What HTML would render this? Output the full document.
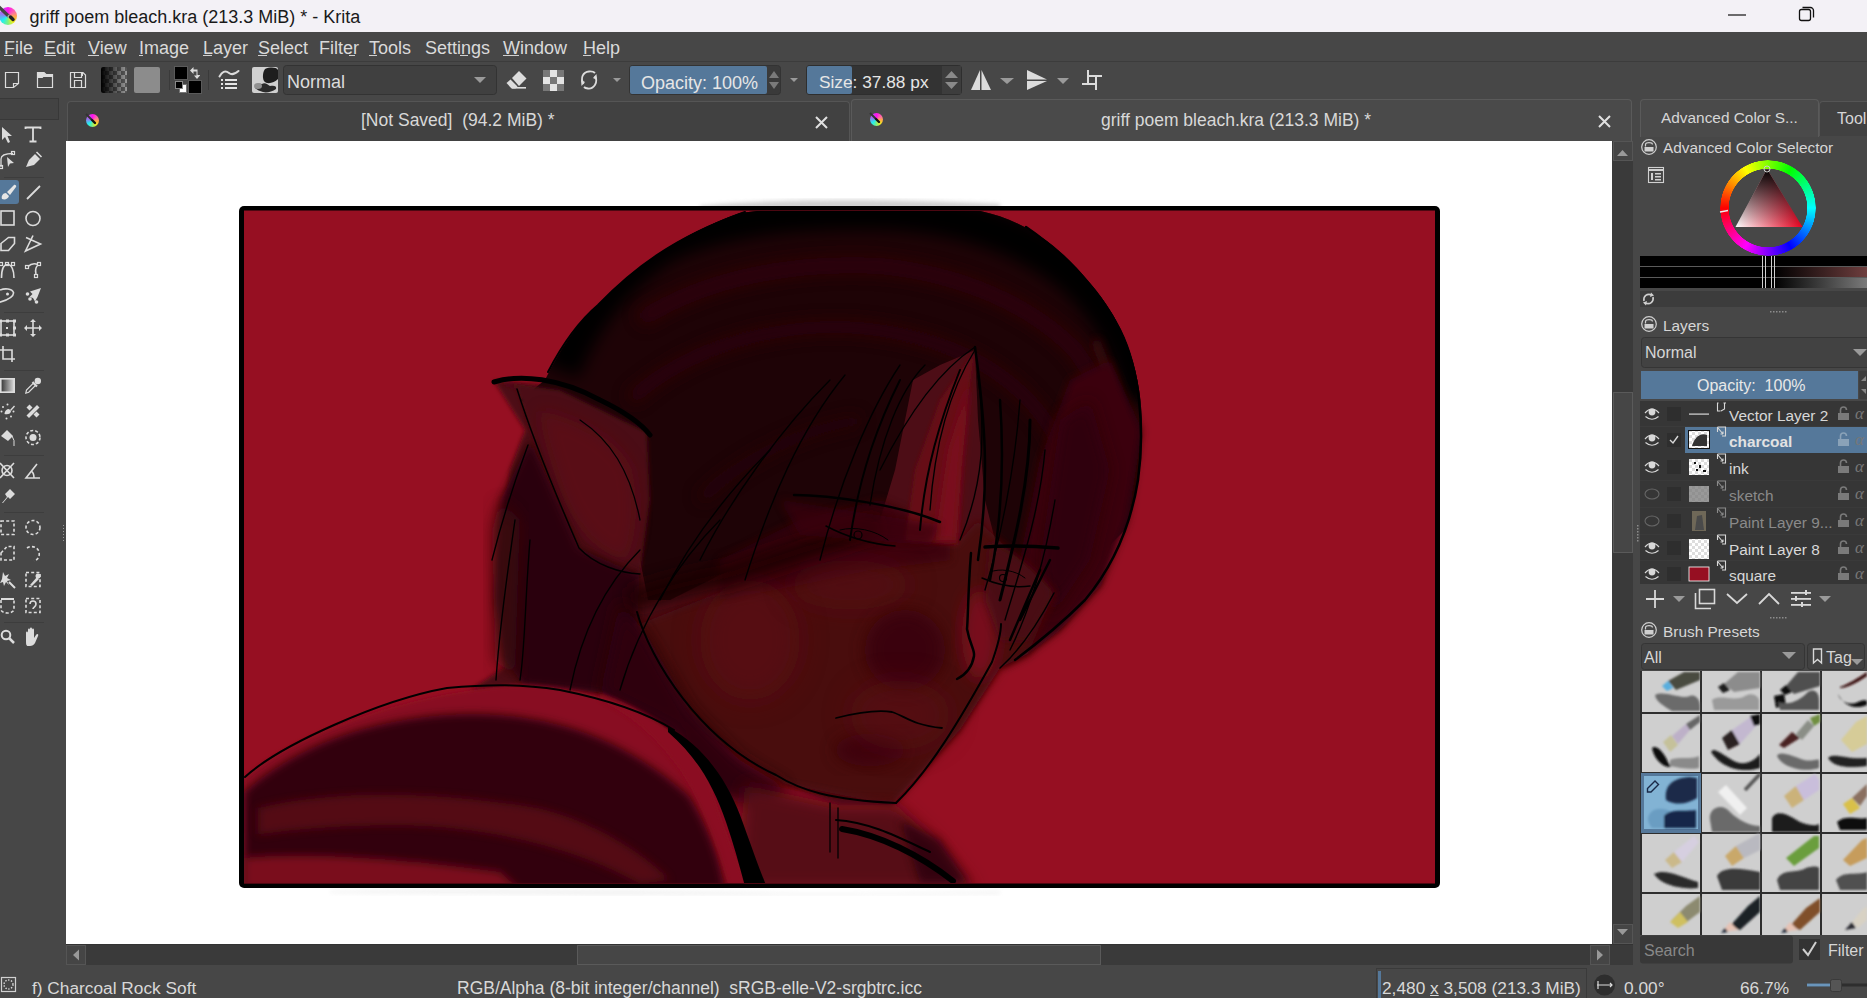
<!DOCTYPE html>
<html><head><meta charset="utf-8">
<style>
*{margin:0;padding:0;box-sizing:border-box}
html,body{width:1867px;height:998px;overflow:hidden;background:#474747;font-family:"Liberation Sans",sans-serif;color:#dcdcdc}
.a{position:absolute}
.t{position:absolute;white-space:nowrap;line-height:1}
svg{position:absolute;overflow:visible}
#title{left:0;top:0;width:1867px;height:32px;background:#f3f1f6}
#menu{left:0;top:32px;width:1867px;height:30px;background:#474747;border-bottom:1px solid #3c3c3c}
.mi{top:39px;font-size:18px;color:#dadada}
.mi u{text-decoration:none;border-bottom:1px solid #dadada}
</style></head><body>
<!-- title bar -->
<div id="title" class="a"></div>
<div class="t" style="left:29.5px;top:7.5px;font-size:18px;color:#1a1a1a">griff poem bleach.kra (213.3 MiB) * - Krita</div>
<!-- menu -->
<div id="menu" class="a"></div>
<div class="t mi" style="left:4px">File</div>
<div class="t mi" style="left:44px">Edit</div>
<div class="t mi" style="left:88px">View</div>
<div class="t mi" style="left:139px">Image</div>
<div class="t mi" style="left:203px">Layer</div>
<div class="t mi" style="left:258px">Select</div>
<div class="t mi" style="left:319px">Filter</div>
<div class="t mi" style="left:369px">Tools</div>
<div class="t mi" style="left:425px">Settings</div>
<div class="t mi" style="left:503px">Window</div>
<div class="t mi" style="left:583px">Help</div>


<svg style="left:0;top:0" width="700" height="70" viewBox="0 0 700 70"><rect x="4" y="55" width="9" height="1" fill="#d0d0d0"/><rect x="44" y="55" width="12" height="1" fill="#d0d0d0"/><rect x="88" y="55" width="11" height="1" fill="#d0d0d0"/><rect x="139" y="55" width="4" height="1" fill="#d0d0d0"/><rect x="203" y="55" width="9" height="1" fill="#d0d0d0"/><rect x="258" y="55" width="9" height="1" fill="#d0d0d0"/><rect x="349" y="55" width="6" height="1" fill="#d0d0d0"/><rect x="369" y="55" width="8" height="1" fill="#d0d0d0"/><rect x="460" y="55" width="8" height="1" fill="#d0d0d0"/><rect x="503" y="55" width="16" height="1" fill="#d0d0d0"/><rect x="583" y="55" width="8" height="1" fill="#d0d0d0"/></svg>
<!-- toolbar -->
<svg style="left:0;top:0" width="1867" height="100" viewBox="0 0 1867 100">
 <g fill="none" stroke="#dcdcdc" stroke-width="1.2">
  <path d="M5.5 72.5H18.5V83.5L13.5 87.5H5.5Z"/>
  <path d="M13.5 87.5V83.5H18.5"/>
  <path d="M37.5 72.5H44L46 74.5H52.5V87.5H37.5Z"/>
  <path d="M38 77.5H42L43.5 75.5H52"/>
  <path d="M70.5 72.5H83L85.5 75V87.5H70.5Z"/>
  <path d="M74.5 72.5V77.5H81.5V72.5"/>
  <path d="M74.5 87.5V80.5H81.5V87.5"/>
 </g>
 <path d="M38 72.5H44L46 74.5H52.5V77H43.5L42 78H38Z" fill="#dcdcdc"/>
 <rect x="82" y="73" width="1" height="3" fill="#dcdcdc"/>
 <defs>
  <pattern id="chk4" width="8" height="8" patternUnits="userSpaceOnUse" x="101" y="67">
   <rect width="8" height="8" fill="#9a9a9a"/><rect width="4" height="4" fill="#5a5a5a"/><rect x="4" y="4" width="4" height="4" fill="#5a5a5a"/>
  </pattern>
  <linearGradient id="g1" x1="0" x2="1"><stop offset="0" stop-color="#000"/><stop offset="1" stop-color="#000" stop-opacity="0"/></linearGradient>
 </defs>
 <rect x="101" y="67" width="26" height="26" rx="2" fill="url(#chk4)"/>
 <rect x="101" y="67" width="26" height="26" rx="2" fill="url(#g1)"/>
 <rect x="134" y="67" width="26" height="26" rx="2" fill="#8c8c8c"/>
 <rect x="169" y="70" width="1" height="20" fill="#3a3a3a"/>
 <rect x="174.5" y="66.5" width="13" height="13" fill="#000" stroke="#5a5a5a"/>
 <rect x="188.5" y="80.5" width="13" height="13" fill="#000" stroke="#5a5a5a"/>
 <rect x="179.5" y="84.5" width="7" height="8" fill="#fff" stroke="#777"/>
 <rect x="175.5" y="81.5" width="7" height="7" fill="#000" stroke="#888"/>
 <path d="M190 70.5L193.5 67V69.5H197.5V75H200V75.5L197 79L194 75.5H196.5V71.5H193.5V74Z" fill="#dcdcdc"/>
 <rect x="208" y="70" width="1" height="20" fill="#3a3a3a"/>
 <path d="M219.5 76.5C222 72 225 70 229 73C232 75.5 235 74 238.5 71" fill="none" stroke="#dcdcdc" stroke-width="2" stroke-linecap="round"/>
 <g fill="#e6e6e6"><rect x="221" y="79" width="2" height="2"/><rect x="225" y="79" width="12" height="2"/><rect x="221" y="83" width="2" height="2"/><rect x="225" y="83" width="12" height="2"/><rect x="221" y="87" width="2" height="2"/><rect x="225" y="87" width="12" height="2"/></g>
 <rect x="252" y="67" width="26" height="26" rx="2" fill="#d0d0d0"/>
 <path d="M265 69C270 67 276 67 278 70V79C274 83 267 85 264 81C262 77 263 72 265 69Z" fill="#1e1e1e"/>
 <path d="M255 88C254 84 258 83 262 84C265 82 268 85 270 86C274 85 277 86 276 89C272 92 266 93 263 92C260 91 257 90 255 88Z" fill="#2a2a2a"/>
 <ellipse cx="258" cy="86" rx="4" ry="3" fill="#909090"/>
 <rect x="283.5" y="65.5" width="213" height="29" rx="3" fill="#404040" stroke="#333"/>
 <path d="M474 77H486L480 83Z" fill="#9a9a9a"/>
 <path d="M512 78L519 71L526.5 78.5L519 86Z" fill="#dcdcdc"/>
 <path d="M506.5 83L510.5 79.5L517.5 86.5L515.5 88.5H511.5Z" fill="#dcdcdc"/>
 <rect x="512" y="87" width="14" height="1.6" fill="#dcdcdc"/>
 <g><rect x="543" y="70" width="21" height="21" fill="#e4e4e4"/>
  <rect x="543" y="70" width="7" height="7" fill="#787878"/><rect x="557" y="70" width="7" height="7" fill="#787878"/>
  <rect x="550" y="77" width="7" height="7" fill="#787878"/>
  <rect x="543" y="84" width="7" height="7" fill="#787878"/><rect x="557" y="84" width="7" height="7" fill="#787878"/></g>
 <path d="M583.5 84C580 78 583 72 589 71.5C592 71.3 594 72 595 73" fill="none" stroke="#dcdcdc" stroke-width="1.8"/>
 <path d="M595 76C598.5 82 594 89 588 88.5C586 88.3 585 88 584 87" fill="none" stroke="#dcdcdc" stroke-width="1.8"/>
 <path d="M581 80L585 82L581.5 86Z" fill="#dcdcdc"/>
 <path d="M597 80L593 78L596.5 74Z" fill="#dcdcdc"/>
 <path d="M613 78H621L617 82Z" fill="#9a9a9a"/>
 <!-- opacity slider -->
 <rect x="629.5" y="65.5" width="151" height="29" rx="3" fill="#3a3a3a" stroke="#333"/>
 <rect x="630" y="66" width="137" height="28" rx="2" fill="#55789a"/>
 <path d="M769 78L774 71L779 78Z" fill="#7a7a7a"/><path d="M769 82L774 89L779 82Z" fill="#7a7a7a"/>
 <path d="M790 78H798L794 82Z" fill="#9a9a9a"/>
 <rect x="806.5" y="65.5" width="155" height="29" rx="3" fill="#333" stroke="#2e2e2e"/>
 <rect x="807" y="66" width="45" height="28" rx="2" fill="#55789a"/>
 <rect x="942" y="66" width="19" height="28" fill="#3d3d3d"/>
 <path d="M945 78L951.5 71L958 78Z" fill="#8a8a8a"/><path d="M945 82L951.5 89L958 82Z" fill="#8a8a8a"/>
 <path d="M980 70V90H971Z" fill="#dcdcdc"/><path d="M981.5 70V90H991Z" fill="#dcdcdc"/>
 <path d="M1000 78H1014L1007 84Z" fill="#9a9a9a"/>
 <path d="M1027 70L1047 79.5H1027Z" fill="#dcdcdc"/><path d="M1027 81H1047L1027 90Z" fill="#dcdcdc"/>
 <path d="M1057 78H1069L1063 84Z" fill="#9a9a9a"/>
 <path d="M1088 70V85M1082 84H1097M1096 76V90M1087 76H1102" fill="none" stroke="#dcdcdc" stroke-width="2"/>
</svg>
<div class="t" style="left:287px;top:73px;font-size:18px;color:#dcdcdc">Normal</div>
<div class="t" style="left:641px;top:73.5px;font-size:18px;color:#e6e6e6">Opacity: 100%</div>
<div class="t" style="left:819px;top:74px;font-size:17.3px;color:#e6e6e6">Size: 37.88 px</div>


<!-- toolbox -->
<div class="a" style="left:-1px;top:98px;width:60px;height:22px;background:#434343;border:1px solid #383838"></div>
<svg style="left:0;top:0" width="70" height="998" viewBox="0 0 70 998">
 <g fill="none" stroke="#dcdcdc" stroke-width="1.6">
  <!-- row1 select arrow / text -->
  <path d="M2 127L2 140L5 137L8 143L10 142L7.5 136L12 136Z" fill="#dcdcdc" stroke="none"/>
  <path d="M25.5 129V127.5H40.5V129M33 127.5V141.5M29.5 141.5H36.5" stroke-width="1.8"/>
  <!-- row2 -->
  <path d="M1 167V159C1 155 5 153.5 13 153.5" stroke-width="1.3"/>
  <rect x="11.5" y="151.5" width="3" height="3" stroke-width="1.2"/>
  <rect x="-0.5" y="165.5" width="3" height="3" stroke-width="1.2"/>
  <path d="M7 157L14 163L10 163.5L8 167Z" fill="#dcdcdc" stroke="none"/>
  <path d="M26 167L29 160L35 154L40 159L34 165Z" fill="#dcdcdc" stroke="none"/>
  <path d="M36.5 152L41.5 157" stroke-width="1.6"/>
 </g>
 <rect x="4" y="177" width="40" height="1" fill="#3d3d3d"/>
 <rect x="-4" y="180" width="23" height="24" rx="3" fill="#55789a"/>
 <path d="M2 199C1 196 3 193 6 193L9 196C8 199 5 200 2 199ZM7 192L14 185C15 184 17 186 16 187L10 195Z" fill="#e6e6e6"/>
 <path d="M27 199L40 186" stroke="#dcdcdc" stroke-width="1.8"/>
 <g fill="none" stroke="#dcdcdc" stroke-width="1.6">
  <rect x="1" y="211" width="13" height="14"/>
  <circle cx="33" cy="218.5" r="7"/>
  <path d="M1 243.5L8.5 237.5H14.5V243.5L8.5 250.5H1Z"/>
  <path d="M26 237.5L40.5 244L25.5 251L33 235.5"/>
  <path d="M1.5 278C1.5 270 3.5 264.5 7.5 264.5C11.5 264.5 14 270 14 278"/>
  <path d="M28 266.5C31 263.5 34 263 38 264.5M38 265C34.5 268 35.5 271 36 274"/>
  <path d="M0 290C5 288 12 288.5 13.5 292.5C14 297 6 300.5 -1 302.5"/>
 </g>
 <g fill="none" stroke="#dcdcdc" stroke-width="1.2"><rect x="-0.5" y="262.5" width="3" height="3"/><rect x="5.5" y="262.5" width="3" height="3"/><rect x="11.5" y="262.5" width="3" height="3"/><rect x="25.5" y="265.5" width="3" height="3"/><rect x="37.5" y="262.5" width="3" height="3"/><rect x="34.5" y="274.5" width="3" height="3"/></g>
 <circle cx="7.5" cy="294" r="1.5" fill="#dcdcdc"/>
 <path d="M41 288L30 291.5L32.5 294L29.5 297L33 298L35 301.5L37.5 297Z" fill="#dcdcdc"/>
 <circle cx="27.5" cy="294" r="1.8" fill="#dcdcdc"/><circle cx="30" cy="299" r="1.8" fill="#dcdcdc"/><circle cx="36.5" cy="302" r="1.8" fill="#dcdcdc"/>
 <rect x="4" y="312" width="40" height="1" fill="#3d3d3d"/>
 <g fill="none" stroke="#dcdcdc" stroke-width="1.6">
  <rect x="1" y="321" width="13" height="14"/>
  <path d="M33 320V336M25 328H41"/>
  <path d="M3 346V359H15M0 350H12V362"/>
 </g>
 <path d="M33 319L30 322H36ZM33 337L30 334H36ZM24 328L27 325V331ZM42 328L39 325V331Z" fill="#dcdcdc"/>
 <g fill="#dcdcdc"><rect x="6" y="327" width="2" height="2"/><rect x="-1" y="319.5" width="3" height="3"/><rect x="13" y="319.5" width="3" height="3"/><rect x="-1" y="333.5" width="3" height="3"/><rect x="13" y="333.5" width="3" height="3"/><rect x="6" y="319.5" width="3" height="3"/><rect x="6" y="333.5" width="3" height="3"/><rect x="13" y="326.5" width="3" height="3"/></g>
 <rect x="4" y="370" width="40" height="1" fill="#3d3d3d"/>
 <defs><linearGradient id="tg" x1="0" x2="1"><stop offset="0" stop-color="#333"/><stop offset="1" stop-color="#ddd"/></linearGradient></defs>
 <rect x="0.8" y="378.8" width="13.4" height="13.4" fill="url(#tg)" stroke="#dcdcdc" stroke-width="1.6"/>
 <circle cx="37.8" cy="381" r="3.2" fill="#dcdcdc"/>
 <path d="M32.5 382L37 386.5" stroke="#dcdcdc" stroke-width="2.2"/>
 <path d="M25.8 393.2L26.5 390L33.5 383L35.7 385.2L28.7 392.2Z" fill="none" stroke="#dcdcdc" stroke-width="1.2"/>
 <g fill="#dcdcdc">
  <path d="M4.5 414C4.5 411 6.5 409 9 409L11 411C11 413.5 8 415 4.5 414Z"/><path d="M10 410L14 405.5L15 406.5L11 411Z"/>
  <circle cx="1.5" cy="411.5" r="1"/><circle cx="6.5" cy="418.5" r="1"/><circle cx="11" cy="416.5" r="1"/><circle cx="13.5" cy="411.5" r="1"/><circle cx="3" cy="407" r="1"/><circle cx="7.5" cy="404.5" r="1"/>
  <path d="M26.5 415.5L37 405L39.5 407.5L29 418Z"/><path d="M29.5 404.5L32.5 407.5L29.5 410.5L26.5 407.5Z"/><path d="M36.5 411.5L39.5 414.5L36.5 417.5L33.5 414.5Z"/>
  <path d="M1 436L7 430L13 436L8 441Z"/><path d="M12 436Q15 440 14 446" stroke="#dcdcdc" fill="none"/>
 </g>
 <circle cx="33" cy="437.5" r="7" fill="none" stroke="#dcdcdc" stroke-width="1.6" stroke-dasharray="3 2"/>
 <circle cx="33" cy="437.5" r="3.5" fill="#dcdcdc"/>
 <rect x="4" y="455" width="40" height="1" fill="#3d3d3d"/>
 <g fill="none" stroke="#dcdcdc" stroke-width="1.6">
  <circle cx="7" cy="470.5" r="5"/><path d="M0 463L14 478M14 463L0 478"/>
  <path d="M40 478H26L37 464M34 478C34 474 33 472 31 471"/>
 </g>
 <path d="M2 503L7 497L5 494L10 489L15 494L10 499L8 497L3 503Z" fill="#dcdcdc"/>
 <rect x="4" y="512" width="40" height="1" fill="#3d3d3d"/>
 <g fill="none" stroke="#dcdcdc" stroke-width="1.6" stroke-dasharray="3 2.2">
  <rect x="1" y="521" width="13" height="13.5"/>
  <circle cx="33" cy="527.5" r="7"/>
  <path d="M1 553L7 546.5H14V560H1Z"/>
  <path d="M27 548C31 545 38 547 39 552C40 556 38 560 34 561"/>
  <rect x="26" y="572.5" width="14" height="14"/>
  <path d="M1 600V610C3 614 12 614 14 610V600"/>
  <rect x="26" y="598.5" width="14" height="14"/>
 </g>
 <g fill="#dcdcdc">
  <path d="M3 572L5 576L9 574L7 578L11 580L7 581L9 585L6 582L4 586L3 582L0 583L2 579Z"/>
  <path d="M9 582L15 588" stroke="#dcdcdc" stroke-width="2"/>
  <path d="M30 585L37 577L39 579L32 586Z"/><circle cx="38" cy="576" r="2.5"/>
  <rect x="1" y="598" width="13" height="2"/>
  <path d="M30 604C30 600 36 600 36 604C36 607 33 607 33 609" fill="none" stroke="#dcdcdc" stroke-width="1.6"/>
 </g>
 <rect x="4" y="622" width="40" height="1" fill="#3d3d3d"/>
 <circle cx="6" cy="635" r="4.3" fill="none" stroke="#dcdcdc" stroke-width="2"/>
 <path d="M9 638L14 643" stroke="#dcdcdc" stroke-width="2.5"/>
 <path d="M26 639V633C26 631 28 631 28 633V637V630C28 628 30 628 30 630V636V629C30 627 32 627 32 629V636V630C32 628 34 628 34 630V638L36 635C37 633 39 634 38 636L35 643C34 645 32 646 30 646H28C26 646 26 644 26 639Z" fill="#dcdcdc"/>
 <g fill="#9a9a9a"><rect x="63" y="525" width="1" height="1"/><rect x="63" y="528" width="1" height="1"/><rect x="63" y="531" width="1" height="1"/><rect x="63" y="534" width="1" height="1"/><rect x="63" y="537" width="1" height="1"/><rect x="63" y="540" width="1" height="1"/></g>
</svg>

<!-- doc tabs -->
<div class="a" style="left:67px;top:101px;width:783px;height:40px;background:#414141;border:1px solid #555;border-bottom:none;border-radius:4px 4px 0 0"></div>
<div class="a" style="left:851px;top:99px;width:781px;height:42px;background:#4a4a4a;border:1px solid #5a5a5a;border-bottom:none;border-radius:4px 4px 0 0"></div>
<div class="t" style="left:361px;top:112px;font-size:17.5px;color:#d8d8d8">[Not Saved]&nbsp; (94.2 MiB) *</div>
<div class="t" style="left:1101px;top:112px;font-size:17.5px;color:#d8d8d8">griff poem bleach.kra (213.3 MiB) *</div>
<svg style="left:0;top:0" width="1867" height="150" viewBox="0 0 1867 150">
 <defs>
  <linearGradient id="kl" x1="0" y1="0" x2="1" y2="1"><stop offset="0" stop-color="#ff00ff"/><stop offset="0.5" stop-color="#ff4080"/><stop offset="1" stop-color="#ffff00"/></linearGradient>
  <linearGradient id="kl2" x1="0" y1="1" x2="1" y2="0"><stop offset="0" stop-color="#00ffff"/><stop offset="0.6" stop-color="#00ffff" stop-opacity="0"/></linearGradient>
 </defs>

 <path d="M816 117L827 128M827 117L816 128" stroke="#e0e0e0" stroke-width="2"/>
 <path d="M1599 116L1610 127M1610 116L1599 127" stroke="#e0e0e0" stroke-width="2"/>

 <path d="M1728 15H1746" stroke="#111" stroke-width="1.2"/>
 <rect x="1799.5" y="9.5" width="11" height="11" rx="2" fill="none" stroke="#111" stroke-width="1.3"/>
 <path d="M1802.5 7.5H1810.5C1812 7.5 1813.5 9 1813.5 10.5V17.5" fill="none" stroke="#111" stroke-width="1.3"/>
</svg>

<div class="a" style="left:-1px;top:6.5px;width:18px;height:18px;border-radius:50%;background:conic-gradient(#ff10f0 0deg,#ff70a0 60deg,#ffb040 100deg,#f0f020 140deg,#80f080 180deg,#20f0f0 230deg,#a070f0 290deg,#ff10f0 360deg);filter:blur(0.4px)"></div>
<div class="a" style="left:85.5px;top:113.5px;width:13px;height:13px;border-radius:50%;background:conic-gradient(#ff10f0 0deg,#ff70a0 60deg,#ffb040 100deg,#f0f020 140deg,#80f080 180deg,#20f0f0 230deg,#a070f0 290deg,#ff10f0 360deg)"></div>
<div class="a" style="left:869.5px;top:112.5px;width:13px;height:13px;border-radius:50%;background:conic-gradient(#ff10f0 0deg,#ff70a0 60deg,#ffb040 100deg,#f0f020 140deg,#80f080 180deg,#20f0f0 230deg,#a070f0 290deg,#ff10f0 360deg)"></div>
<svg style="left:0;top:0" width="900" height="140" viewBox="0 0 900 140">
 <path d="M-1 7L8 15.5" stroke="#444" stroke-width="3.2" stroke-linecap="round"/><path d="M8 15.5L10 17.5" stroke="#aaa" stroke-width="2.5"/><path d="M10.5 17L13 19.5" stroke="#222" stroke-width="3.5" stroke-linecap="round"/>
 <path d="M86 114L91.5 119.5" stroke="#333" stroke-width="2"/><path d="M92 120L95 123" stroke="#111" stroke-width="2.4" stroke-linecap="round"/>
 <path d="M870 113L875.5 118.5" stroke="#333" stroke-width="2"/><path d="M876 119L879 122" stroke="#111" stroke-width="2.4" stroke-linecap="round"/>
</svg>

<!-- scrollbars -->
<div class="a" style="left:1612px;top:141px;width:21px;height:804px;background:#3a3a3a"></div>
<div class="a" style="left:1613px;top:141px;width:20px;height:20px;background:#454545;border:1px solid #555"></div>
<div class="a" style="left:1613px;top:392px;width:20px;height:161px;background:#464646;border:1px solid #5a5a5a"></div>
<div class="a" style="left:1613px;top:924px;width:20px;height:20px;background:#454545;border:1px solid #555"></div>
<div class="a" style="left:66px;top:944px;width:1567px;height:21px;background:#3a3a3a;border-top:1px solid #333"></div>
<div class="a" style="left:66px;top:945px;width:20px;height:20px;background:#454545;border:1px solid #555"></div>
<div class="a" style="left:577px;top:945px;width:524px;height:20px;background:#464646;border:1px solid #5a5a5a"></div>
<div class="a" style="left:1590px;top:945px;width:20px;height:20px;background:#454545;border:1px solid #555"></div>
<svg style="left:0;top:0" width="1867" height="998" viewBox="0 0 1867 998">
 <path d="M79 949.5V960.5L73 955Z" fill="#999"/>
 <path d="M1597 949.5V960.5L1603 955Z" fill="#999"/>
 <path d="M1617 156H1628L1622.5 150Z" fill="#999"/>
 <path d="M1617 929H1628L1622.5 935Z" fill="#999"/>
</svg>


<!-- docker panel -->
<div class="a" style="left:1633px;top:98px;width:234px;height:867px;background:#474747"></div>
<div class="a" style="left:1640px;top:99px;width:179px;height:38px;background:#4a4a4a;border:1px solid #5a5a5a;border-bottom:none;border-radius:4px 4px 0 0"></div>
<div class="a" style="left:1819px;top:101px;width:60px;height:35px;background:#414141;border:1px solid #555;border-bottom:none;border-radius:4px 4px 0 0"></div>
<div class="t" style="left:1661px;top:110px;font-size:15.4px;color:#d6d6d6">Advanced Color S...</div>
<div class="t" style="left:1837px;top:111px;font-size:16px;color:#d6d6d6">Tool</div>
<div class="t" style="left:1663px;top:140px;font-size:15.4px;color:#d6d6d6">Advanced Color Selector</div>
<div class="t" style="left:1663px;top:318px;font-size:15.4px;color:#d6d6d6">Layers</div>
<div class="t" style="left:1663px;top:624px;font-size:15.4px;color:#d6d6d6">Brush Presets</div>
<div class="a" style="left:1720px;top:160px;width:96px;height:96px;border-radius:50%;background:conic-gradient(from 270deg,#f00,#ff0 60deg,#0f0 120deg,#0ff 180deg,#00f 240deg,#f0f 300deg,#f00 360deg);-webkit-mask:radial-gradient(circle,transparent 39px,#000 39.5px,#000 47.5px,transparent 48px)"></div>
<svg style="left:0;top:0" width="1867" height="998" viewBox="0 0 1867 998">
 <defs>
  <g id="lock"><circle cx="0" cy="0" r="7.3" fill="none" stroke="#d0d0d0" stroke-width="1.2"/><path d="M-3.5 -0.5V-2.5C-3.5 -5 3.5 -5 3.5 -2.5" fill="none" stroke="#d0d0d0" stroke-width="1.2"/><rect x="-4.5" y="0" width="9" height="4.5" fill="#d0d0d0"/></g>
  <linearGradient id="tri1" x1="0.5" y1="0" x2="0.5" y2="1"><stop offset="0" stop-color="#000"/><stop offset="1" stop-color="#000" stop-opacity="0"/></linearGradient>
  <linearGradient id="tri2" x1="1" y1="0.5" x2="0" y2="0.5"><stop offset="0" stop-color="#e8001e"/><stop offset="1" stop-color="#ffffff"/></linearGradient>
  <linearGradient id="sl2" x1="0" x2="1"><stop offset="0" stop-color="#000"/><stop offset="1" stop-color="#6e3e3e"/></linearGradient>
  <linearGradient id="sl3" x1="0" x2="1"><stop offset="0" stop-color="#000"/><stop offset="1" stop-color="#7a7a7a"/></linearGradient>
 </defs>
 <use href="#lock" x="1649" y="147"/>
 <use href="#lock" x="1649" y="324"/>
 <use href="#lock" x="1649" y="630"/>
 <rect x="1648.5" y="167.5" width="15" height="15" fill="none" stroke="#d0d0d0" stroke-width="1.1"/>
 <rect x="1649" y="169" width="14" height="2" fill="#d0d0d0"/>
 <rect x="1651" y="173" width="2" height="7" fill="#d0d0d0"/>
 <rect x="1655" y="173" width="6" height="1.5" fill="#d0d0d0"/><rect x="1655" y="176" width="6" height="1.5" fill="#d0d0d0"/><rect x="1655" y="179" width="6" height="1.5" fill="#d0d0d0"/>
 <!-- color wheel -->

 <path d="M1767 169L1802.5 227H1735.5Z" fill="url(#tri2)"/>
 <path d="M1767 169L1802.5 227H1735.5Z" fill="url(#tri1)"/>
 <circle cx="1767" cy="169" r="3" fill="none" stroke="#ccc" stroke-width="1"/>
 <path d="M1720 212L1728 210.5" stroke="#eee" stroke-width="1.3"/>
 <rect x="1640" y="256" width="227" height="10" fill="#000"/>
 <rect x="1640" y="267" width="227" height="10" fill="#000"/>
 <rect x="1774" y="267" width="93" height="10" fill="url(#sl2)"/>
 <rect x="1640" y="278" width="227" height="10" fill="#000"/>
 <rect x="1774" y="278" width="93" height="10" fill="url(#sl3)"/>
 <rect x="1640" y="266" width="227" height="1" fill="#5a5a5a"/><rect x="1640" y="277" width="227" height="1" fill="#5a5a5a"/>
 <g fill="none" stroke="#cfcfcf" stroke-width="1"><path d="M1762.5 256V288M1765.5 256V288M1771.5 256V288M1774.5 256V288"/></g>
 <rect x="1640" y="291" width="227" height="16" fill="#3c3c3c"/>
 <path d="M1644 301C1643 296 1647 293 1652 295M1653 297C1654 302 1650 305 1645 303" fill="none" stroke="#d0d0d0" stroke-width="1.6"/>
 <path d="M1651 292.5L1654 295.5L1650 297Z" fill="#d0d0d0"/><path d="M1646 305.5L1643 302.5L1647 301Z" fill="#d0d0d0"/>
 <g fill="#8c8c8c"><rect x="1770" y="311" width="1.5" height="1.5"/><rect x="1773" y="311" width="1.5" height="1.5"/><rect x="1776" y="311" width="1.5" height="1.5"/><rect x="1779" y="311" width="1.5" height="1.5"/><rect x="1782" y="311" width="1.5" height="1.5"/><rect x="1785" y="311" width="1.5" height="1.5"/></g>
 <g fill="#8c8c8c"><rect x="1770" y="617" width="1.5" height="1.5"/><rect x="1773" y="617" width="1.5" height="1.5"/><rect x="1776" y="617" width="1.5" height="1.5"/><rect x="1779" y="617" width="1.5" height="1.5"/><rect x="1782" y="617" width="1.5" height="1.5"/><rect x="1785" y="617" width="1.5" height="1.5"/></g>
 <g fill="#8c8c8c"><rect x="1637" y="525" width="1.5" height="1.5"/><rect x="1637" y="528" width="1.5" height="1.5"/><rect x="1637" y="531" width="1.5" height="1.5"/><rect x="1637" y="534" width="1.5" height="1.5"/><rect x="1637" y="537" width="1.5" height="1.5"/><rect x="1637" y="540" width="1.5" height="1.5"/></g>
 <!-- layers combo + opacity -->
 <rect x="1641.5" y="337.5" width="240" height="30" rx="3" fill="#424242" stroke="#353535"/>
 <path d="M1853 349H1867V349L1860 356Z" fill="#9a9a9a"/>
 <rect x="1641" y="371" width="217" height="28" fill="#55789a"/>
 <rect x="1859" y="371" width="10" height="28" fill="#3f3f3f"/>
 <path d="M1861 381L1866 376V381Z" fill="#888"/><path d="M1861 389L1866 394V389Z" fill="#888"/>
 <!-- layer list -->
 <rect x="1640" y="401" width="227" height="183" fill="#363636"/>
 <rect x="1640" y="426" width="227" height="1" fill="#3b3b3b"/>
 <rect x="1685" y="427" width="182" height="26" fill="#55789a"/>
 <g fill="#3a3a3a"><rect x="1640" y="480" width="227" height="1"/><rect x="1640" y="507" width="227" height="1"/><rect x="1640" y="534" width="227" height="1"/><rect x="1640" y="560" width="227" height="1"/></g>
</svg>
<div class="t" style="left:1645px;top:345px;font-size:16px;color:#d6d6d6">Normal</div>
<div class="t" style="left:1697px;top:378px;font-size:16px;color:#e8e8e8">Opacity:&nbsp; 100%</div>


<!-- layer rows -->
<svg style="left:0;top:0" width="1867" height="998" viewBox="0 0 1867 998">
<defs><pattern id="chk3" width="6" height="6" patternUnits="userSpaceOnUse"><rect width="6" height="6" fill="#fff"/><rect width="3" height="3" fill="#ddd"/><rect x="3" y="3" width="3" height="3" fill="#ddd"/></pattern>
<clipPath id="lc"><rect x="1640" y="401" width="227" height="183"/></clipPath></defs>
<g clip-path="url(#lc)">
<path d="M1645 413.0Q1652 405.0 1659 413.0" fill="none" stroke="#d8d8d8" stroke-width="1.2"/><circle cx="1652" cy="412.0" r="3.4" fill="#d8d8d8"/><path d="M1645.5 416.5Q1652 422.0 1658.5 416.5" fill="none" stroke="#d8d8d8" stroke-width="1.2"/>
<rect x="1667" y="407" width="14" height="14" fill="#2e2e2e"/>
<rect x="1689" y="413.5" width="20" height="1.2" fill="#d8d8d8"/>
<path d="M1717.5 403V411H1720.5M1717 403H1718.5M1724.5 403V409L1721 411M1723.5 403H1726" fill="none" stroke="#d8d8d8" stroke-width="1.1"/>
<path d="M1838 413H1849V420H1838Z" fill="#7a7a7a"/><path d="M1840.5 413V410C1840.5 406 1846.5 406 1846.5 410" fill="none" stroke="#7a7a7a" stroke-width="1.6"/>
<path d="M1645 439.0Q1652 431.0 1659 439.0" fill="none" stroke="#d8d8d8" stroke-width="1.2"/><circle cx="1652" cy="438.0" r="3.4" fill="#d8d8d8"/><path d="M1645.5 442.5Q1652 448.0 1658.5 442.5" fill="none" stroke="#d8d8d8" stroke-width="1.2"/>
<rect x="1667" y="433" width="14" height="14" fill="#2e2e2e"/>
<path d="M1670 440L1673 443L1678 436" fill="none" stroke="#d8d8d8" stroke-width="1.4"/>
<rect x="1688.5" y="430.5" width="21" height="18" fill="url(#chk3)" stroke="#111"/><path d="M1692 446C1694 438 1700 432 1707 435V446Z" fill="#333"/>
<path d="M1717.5 427V432M1717.5 427H1725.5V436H1722M1718 428L1723 434M1723 434V431.5M1723 434H1720.5" fill="none" stroke="#d8d8d8" stroke-width="1.1"/>
<path d="M1838 439H1849V446H1838Z" fill="#8aa2b8"/><path d="M1840.5 439V436C1840.5 432 1846.5 432 1846.5 436" fill="none" stroke="#8aa2b8" stroke-width="1.6"/>
<path d="M1645 466.0Q1652 458.0 1659 466.0" fill="none" stroke="#d8d8d8" stroke-width="1.2"/><circle cx="1652" cy="465.0" r="3.4" fill="#d8d8d8"/><path d="M1645.5 469.5Q1652 475.0 1658.5 469.5" fill="none" stroke="#d8d8d8" stroke-width="1.2"/>
<rect x="1667" y="460" width="14" height="14" fill="#2e2e2e"/>
<rect x="1689" y="459" width="20" height="16" fill="url(#chk3)"/><g fill="#111"><rect x="1694" y="462" width="2" height="2"/><rect x="1699" y="465" width="2" height="3"/><rect x="1703" y="470" width="3" height="2"/><rect x="1696" y="469" width="2" height="2"/></g>
<path d="M1717.5 454V459M1717.5 454H1725.5V463H1722M1718 455L1723 461M1723 461V458.5M1723 461H1720.5" fill="none" stroke="#d8d8d8" stroke-width="1.1"/>
<path d="M1838 466H1849V473H1838Z" fill="#7a7a7a"/><path d="M1840.5 466V463C1840.5 459 1846.5 459 1846.5 463" fill="none" stroke="#7a7a7a" stroke-width="1.6"/>
<ellipse cx="1652" cy="494" rx="7" ry="5" fill="none" stroke="#666" stroke-width="1.1"/>
<rect x="1667" y="487" width="14" height="14" fill="#2e2e2e"/>
<rect x="1689" y="486" width="20" height="16" fill="#777"/><rect x="1689" y="486" width="20" height="16" fill="url(#chk3)" opacity="0.25"/>
<path d="M1717.5 481V486M1717.5 481H1725.5V490H1722M1718 482L1723 488M1723 488V485.5M1723 488H1720.5" fill="none" stroke="#8a8a8a" stroke-width="1.1"/>
<path d="M1838 493H1849V500H1838Z" fill="#7a7a7a"/><path d="M1840.5 493V490C1840.5 486 1846.5 486 1846.5 490" fill="none" stroke="#7a7a7a" stroke-width="1.6"/>
<ellipse cx="1652" cy="521" rx="7" ry="5" fill="none" stroke="#666" stroke-width="1.1"/>
<rect x="1667" y="514" width="14" height="14" fill="#2e2e2e"/>
<rect x="1692" y="511" width="14" height="20" fill="#6f6858"/><path d="M1695 530L1697 516L1702 515L1704 530Z" fill="#4a4a4a"/>
<path d="M1717.5 508V513M1717.5 508H1725.5V517H1722M1718 509L1723 515M1723 515V512.5M1723 515H1720.5" fill="none" stroke="#8a8a8a" stroke-width="1.1"/>
<path d="M1838 520H1849V527H1838Z" fill="#7a7a7a"/><path d="M1840.5 520V517C1840.5 513 1846.5 513 1846.5 517" fill="none" stroke="#7a7a7a" stroke-width="1.6"/>
<path d="M1645 547.0Q1652 539.0 1659 547.0" fill="none" stroke="#d8d8d8" stroke-width="1.2"/><circle cx="1652" cy="546.0" r="3.4" fill="#d8d8d8"/><path d="M1645.5 550.5Q1652 556.0 1658.5 550.5" fill="none" stroke="#d8d8d8" stroke-width="1.2"/>
<rect x="1667" y="541" width="14" height="14" fill="#2e2e2e"/>
<rect x="1689" y="539" width="20" height="20" fill="url(#chk3)"/>
<path d="M1717.5 535V540M1717.5 535H1725.5V544H1722M1718 536L1723 542M1723 542V539.5M1723 542H1720.5" fill="none" stroke="#d8d8d8" stroke-width="1.1"/>
<path d="M1838 547H1849V554H1838Z" fill="#7a7a7a"/><path d="M1840.5 547V544C1840.5 540 1846.5 540 1846.5 544" fill="none" stroke="#7a7a7a" stroke-width="1.6"/>
<path d="M1645 573.0Q1652 565.0 1659 573.0" fill="none" stroke="#d8d8d8" stroke-width="1.2"/><circle cx="1652" cy="572.0" r="3.4" fill="#d8d8d8"/><path d="M1645.5 576.5Q1652 582.0 1658.5 576.5" fill="none" stroke="#d8d8d8" stroke-width="1.2"/>
<rect x="1667" y="567" width="14" height="14" fill="#2e2e2e"/>
<rect x="1689" y="567" width="20" height="14" fill="#960f22" stroke="#fff" stroke-width="0.8"/>
<path d="M1717.5 561V566M1717.5 561H1725.5V570H1722M1718 562L1723 568M1723 568V565.5M1723 568H1720.5" fill="none" stroke="#d8d8d8" stroke-width="1.1"/>
<path d="M1838 573H1849V580H1838Z" fill="#7a7a7a"/><path d="M1840.5 573V570C1840.5 566 1846.5 566 1846.5 570" fill="none" stroke="#7a7a7a" stroke-width="1.6"/>
</g>
<path d="M1655 590V608M1646 599H1664" stroke="#d8d8d8" stroke-width="1.8"/>
<path d="M1673 596H1685L1679 602Z" fill="#9a9a9a"/>
<rect x="1699.5" y="589.5" width="15" height="14" fill="none" stroke="#d8d8d8" stroke-width="1.6"/>
<path d="M1695.5 593V608.5H1711" fill="none" stroke="#d8d8d8" stroke-width="1.6"/>
<path d="M1727 594L1737 603L1747 594" fill="none" stroke="#d8d8d8" stroke-width="1.8"/>
<path d="M1759 604L1769 594L1779 604" fill="none" stroke="#d8d8d8" stroke-width="1.8"/>
<g fill="#d8d8d8"><rect x="1791" y="592" width="20" height="1.8"/><rect x="1791" y="598" width="20" height="1.8"/><rect x="1791" y="604" width="20" height="1.8"/><rect x="1805" y="590" width="2" height="5"/><rect x="1795" y="596" width="2" height="5"/><rect x="1801" y="602" width="2" height="5"/></g>
<path d="M1819 596H1831L1825 602Z" fill="#9a9a9a"/>
</svg>
<div class="t" style="left:1729px;top:408px;font-size:15.4px;color:#d8d8d8;font-weight:normal">Vector Layer 2</div>
<div class="t" style="left:1855px;top:405px;font-size:17px;color:#777;font-style:italic;font-family:'Liberation Serif',serif">&#945;</div>
<div class="t" style="left:1729px;top:434px;font-size:15.4px;color:#e2e2e2;font-weight:bold">charcoal</div>
<div class="t" style="left:1855px;top:431px;font-size:17px;color:#777;font-style:italic;font-family:'Liberation Serif',serif">&#945;</div>
<div class="t" style="left:1729px;top:461px;font-size:15.4px;color:#d8d8d8;font-weight:normal">ink</div>
<div class="t" style="left:1855px;top:458px;font-size:17px;color:#777;font-style:italic;font-family:'Liberation Serif',serif">&#945;</div>
<div class="t" style="left:1729px;top:488px;font-size:15.4px;color:#8a8a8a;font-weight:normal">sketch</div>
<div class="t" style="left:1855px;top:485px;font-size:17px;color:#777;font-style:italic;font-family:'Liberation Serif',serif">&#945;</div>
<div class="t" style="left:1729px;top:515px;font-size:15.4px;color:#8a8a8a;font-weight:normal">Paint Layer 9...</div>
<div class="t" style="left:1855px;top:512px;font-size:17px;color:#777;font-style:italic;font-family:'Liberation Serif',serif">&#945;</div>
<div class="t" style="left:1729px;top:542px;font-size:15.4px;color:#d8d8d8;font-weight:normal">Paint Layer 8</div>
<div class="t" style="left:1855px;top:539px;font-size:17px;color:#777;font-style:italic;font-family:'Liberation Serif',serif">&#945;</div>
<div class="t" style="left:1729px;top:568px;font-size:15.4px;color:#d8d8d8;font-weight:normal">square</div>
<div class="t" style="left:1855px;top:565px;font-size:17px;color:#777;font-style:italic;font-family:'Liberation Serif',serif">&#945;</div>


<!-- brush presets -->
<svg style="left:0;top:0" width="1867" height="998" viewBox="0 0 1867 998">
 <defs>
  <clipPath id="bc"><rect x="1641" y="671" width="226" height="264"/></clipPath>
  <filter id="bl1" x="-20%" y="-20%" width="140%" height="140%"><feGaussianBlur stdDeviation="1.2"/></filter>
 </defs>
 <rect x="1641.5" y="643.5" width="163" height="26" rx="3" fill="#424242" stroke="#353535"/>
 <path d="M1782 652H1796L1789 659Z" fill="#9a9a9a"/>
 <rect x="1807.5" y="643.5" width="57" height="26" rx="3" fill="#424242" stroke="#353535"/>
 <path d="M1813.5 649V663L1817.5 659.5L1821.5 663V649Z" fill="none" stroke="#d8d8d8" stroke-width="1.4"/>
 <path d="M1851 659H1863L1857 665Z" fill="#9a9a9a"/>
 <rect x="1640" y="671" width="227" height="264" fill="#2e2e2e"/>
 <g clip-path="url(#bc)">
  <g fill="#cfcfcf">
   <rect x="1642" y="653" width="58" height="59"/><rect x="1702" y="653" width="58" height="59"/><rect x="1762" y="653" width="58" height="59"/><rect x="1822" y="653" width="58" height="59"/>
   <rect x="1642" y="714" width="58" height="58"/><rect x="1702" y="714" width="58" height="58"/><rect x="1762" y="714" width="58" height="58"/><rect x="1822" y="714" width="58" height="58"/>
   <rect x="1702" y="774" width="58" height="58"/><rect x="1762" y="774" width="58" height="58"/><rect x="1822" y="774" width="58" height="58"/>
   <rect x="1642" y="834" width="58" height="58"/><rect x="1702" y="834" width="58" height="58"/><rect x="1762" y="834" width="58" height="58"/><rect x="1822" y="834" width="58" height="58"/>
   <rect x="1642" y="894" width="58" height="58"/><rect x="1702" y="894" width="58" height="58"/><rect x="1762" y="894" width="58" height="58"/><rect x="1822" y="894" width="58" height="58"/>
  </g>
  <rect x="1641" y="773" width="60" height="60" fill="#55789a"/>
  <rect x="1644" y="776" width="54" height="53" fill="#82b3d4"/>
  <g filter="url(#bl1)">
   <!-- r1c1 marker olive w/ blue tip -->
   <path d="M1655 695C1665 690 1680 700 1690 696C1696 694 1700 700 1700 706V711H1672C1664 706 1656 702 1655 695Z" fill="#5a5a5a" opacity="0.85"/>
   <path d="M1668 681L1684 672H1700V680L1676 690Z" fill="#4a4b40"/>
   <path d="M1662 686L1668 681L1673 688L1667 691Z" fill="#58aede"/>
   <!-- r1c2 gray marker -->
   <path d="M1712 700C1720 694 1735 702 1745 696C1752 692 1758 696 1759 700V710H1714Z" fill="#9a9a9a"/>
   <path d="M1724 684L1738 672H1760V688L1734 692Z" fill="#8c8c8c"/>
   <path d="M1718 687L1724 683L1730 690L1723 693Z" fill="#1a1a1a"/>
   <!-- r1c3 dark marker -->
   <path d="M1774 696L1784 694L1786 705L1776 708Z" fill="#0a0a0a"/>
   <path d="M1778 702C1790 706 1800 700 1808 692C1814 688 1819 692 1819 700V710H1780Z" fill="#555"/>
   <path d="M1786 686L1798 672H1820V686L1794 694Z" fill="#505050"/>
   <path d="M1780 690L1786 685L1792 692L1785 695Z" fill="#111"/>
   <!-- r1c4 thin brush -->
   <path d="M1840 687C1848 684 1858 678 1867 672V676C1858 682 1848 688 1840 688Z" fill="#3a1010"/>
   <path d="M1838 694C1840 702 1850 706 1858 702C1862 700 1866 700 1867 701V705C1860 708 1846 710 1838 694Z" fill="#111"/>
   <!-- r2c1 fan brush -->
   <path d="M1652 748C1656 744 1664 752 1668 762L1671 767C1664 768 1654 760 1652 748Z" fill="#111"/>
   <path d="M1670 760C1680 756 1690 760 1699 756V768C1690 770 1680 768 1670 766Z" fill="#8a8a8a"/>
   <path d="M1663 742L1671 735L1678 745L1670 752Z" fill="#c5c19a"/>
   <path d="M1672 736L1686 724L1690 730L1678 744Z" fill="#bdb0c8"/>
   <path d="M1686 724L1700 715V722L1690 730Z" fill="#666"/>
   <!-- r2c2 round black brush -->
   <path d="M1711 752C1714 746 1724 756 1736 762C1746 766 1755 760 1760 754V768C1748 772 1724 772 1711 752Z" fill="#1a1a1a"/>
   <path d="M1722 738L1732 730L1740 744L1728 750Z" fill="#2a2424"/>
   <path d="M1732 730L1752 716L1756 726L1740 744Z" fill="#c3b8d0"/>
   <path d="M1750 716L1760 714V724L1754 726Z" fill="#111"/>
   <!-- r2c3 maroon brush -->
   <path d="M1777 756C1780 750 1792 756 1804 760C1812 762 1818 758 1819 760V768C1808 772 1784 770 1777 756Z" fill="#6a6a6a"/>
   <path d="M1779 745L1792 732L1800 738L1784 748Z" fill="#4a2424"/>
   <path d="M1796 734L1808 720L1814 726L1802 740Z" fill="#8a8e86"/>
   <path d="M1810 718L1820 714V722L1814 726Z" fill="#6f8f40"/>
   <!-- r2c4 cream bristle -->
   <path d="M1841 740L1856 722L1867 716V744L1852 752Z" fill="#d6cc98"/>
   <path d="M1828 758C1834 752 1846 760 1867 758V766C1850 768 1834 768 1828 758Z" fill="#222"/>
   <!-- r3c1 selected -->
   <path d="M1666 800C1664 786 1672 778 1690 777L1697 778V798C1688 804 1676 806 1666 800Z" fill="#1b2b4a"/>
   <path d="M1648 818C1650 808 1662 806 1672 812L1680 812V828H1652C1649 824 1648 822 1648 818Z" fill="#6a9dc2"/>
   <path d="M1664 816C1670 808 1684 812 1696 810V828H1664Z" fill="#17274a"/>
   <!-- r3c2 roller -->
   <path d="M1710 820C1708 808 1722 802 1730 812C1738 820 1750 826 1760 826V832H1712Z" fill="#6a6a6a"/>
   <path d="M1718 792L1726 785L1747 808L1740 815Z" fill="#f0f0f0"/>
   <path d="M1745 790L1760 774" stroke="#555" stroke-width="3.5"/>
   <!-- r3c3 flat brush black speckle -->
   <path d="M1772 818C1778 808 1790 816 1800 822C1810 826 1816 826 1819 824V832H1772Z" fill="#1a1a1a"/>
   <path d="M1784 796L1796 786L1804 800L1792 808Z" fill="#cbb27a"/>
   <path d="M1796 786L1815 774L1819 780V790L1804 800Z" fill="#c9bedb"/>
   <!-- r3c4 fan yellow -->
   <path d="M1837 822C1846 814 1856 820 1867 818V830H1840Z" fill="#111"/>
   <path d="M1843 804L1852 798L1860 808L1850 814Z" fill="#d9c04a"/>
   <path d="M1852 798L1867 784V796L1860 806Z" fill="#8a7060"/>
   <!-- r4c1 -->
   <path d="M1654 874C1664 868 1680 876 1698 882V888C1680 890 1660 884 1654 874Z" fill="#2a2a2a"/>
   <path d="M1665 860L1674 852L1682 862L1672 868Z" fill="#cbb98a"/>
   <path d="M1674 852L1694 836L1699 842L1682 862Z" fill="#d6cfe0"/>
   <!-- r4c2 -->
   <path d="M1717 876C1722 866 1740 868 1760 872V890H1722Z" fill="#3a3a3a"/>
   <path d="M1725 856L1736 846L1744 858L1732 866Z" fill="#c9a86a"/>
   <path d="M1736 846L1758 834H1760V850L1744 858Z" fill="#b9b9c0"/>
   <!-- r4c3 green crayon -->
   <path d="M1777 880C1782 868 1796 874 1806 868C1812 866 1818 866 1819 868V890H1780Z" fill="#333" opacity="0.9"/>
   <path d="M1786 858L1814 836H1819V848L1794 866Z" fill="#6a9e3e"/>
   <!-- r4c4 tan crayon -->
   <path d="M1836 880C1844 870 1856 876 1867 872V890H1840Z" fill="#3a3a3a" opacity="0.85"/>
   <path d="M1843 860L1862 840L1867 838V858L1850 866Z" fill="#c69c5c"/>
   <!-- r5c1 gold marker -->
   <path d="M1672 920L1686 906L1700 896V912L1684 924Z" fill="#8c8a70"/>
   <path d="M1670 922L1680 912L1688 922L1678 928Z" fill="#cfc060"/>
   <!-- r5c2 black pencil -->
   <path d="M1730 926L1748 906L1760 896V912L1740 930Z" fill="#1e2226"/>
   <path d="M1722 932L1730 922L1738 930Z" fill="#e6c2b4"/>
   <path d="M1721 933L1725 928L1728 932Z" fill="#1a2638"/>
   <!-- r5c3 brown pencil -->
   <path d="M1790 926L1806 908L1820 898V912L1800 930Z" fill="#80502c"/>
   <path d="M1782 932L1790 922L1798 930Z" fill="#e6c2b4"/>
   <path d="M1781 933L1785 928L1788 932Z" fill="#1a2638"/>
   <!-- r5c4 light pencil -->
   <path d="M1852 922L1862 910L1867 906V920L1858 928Z" fill="#d8d2c4"/>
   <path d="M1845 930L1852 922L1856 928Z" fill="#2a2a30"/>
  </g>
 </g>
 <rect x="1640" y="935.5" width="153" height="28" rx="3" fill="#383838"/>
 <rect x="1799" y="939" width="21" height="21" fill="#333"/>
 <path d="M1803 949L1808 955L1816 942" fill="none" stroke="#cfcfcf" stroke-width="2"/>
 <path d="M1647.5 788.5L1655 781L1658.5 784.5L1651 792H1647.5Z" fill="none" stroke="#1a2a48" stroke-width="1.4"/>
</svg>
<div class="t" style="left:1644px;top:650px;font-size:16px;color:#d6d6d6">All</div>
<div class="t" style="left:1826px;top:650px;font-size:16px;color:#d6d6d6">Tag</div>
<div class="t" style="left:1644px;top:943px;font-size:16px;color:#888">Search</div>
<div class="t" style="left:1828px;top:943px;font-size:16px;color:#d6d6d6">Filter</div>

<!-- status bar -->
<svg style="left:0;top:0" width="1867" height="998" viewBox="0 0 1867 998">
 <rect x="1.5" y="977.5" width="14" height="14" fill="none" stroke="#d0d0d0" stroke-width="1.2"/>
 <circle cx="8.5" cy="984.5" r="4.5" fill="none" stroke="#e0e0e0" stroke-width="1.4" stroke-dasharray="1.3 1.6"/>
 <rect x="1376.5" y="968.5" width="210" height="40" fill="none" stroke="#3a3a3a"/>
 <rect x="1378" y="971" width="3" height="27" fill="#55789a"/>
 <circle cx="1604.5" cy="985" r="10.5" fill="#2e2e2e"/>
 <path d="M1597 985H1612M1610 983L1612 985L1610 987M1598 981V989" stroke="#dcdcdc" stroke-width="1.2" fill="none"/>
 <rect x="1807" y="983.5" width="60" height="3" fill="#2e2e2e"/>
 <rect x="1807" y="983.5" width="24" height="3" fill="#6a95bb"/>
 <rect x="1830.5" y="979.5" width="11" height="12" rx="2" fill="#555" stroke="#3a3a3a"/>
</svg>
<div class="t" style="left:32px;top:980px;font-size:17.3px;color:#d8d8d8">f) Charcoal Rock Soft</div>
<div class="t" style="left:457px;top:980px;font-size:17.5px;color:#d8d8d8">RGB/Alpha (8-bit integer/channel)&nbsp; sRGB-elle-V2-srgbtrc.icc</div>
<div class="t" style="left:1382px;top:980px;font-size:17.3px;color:#d8d8d8">2,480 <span style="text-decoration:underline">x</span> 3,508 (213.3 MiB)</div>
<div class="t" style="left:1624px;top:980px;font-size:17.3px;color:#d8d8d8">0.00°</div>
<div class="t" style="left:1740px;top:980px;font-size:17.3px;color:#d8d8d8">66.7%</div>

<!-- canvas -->
<div class="a" style="left:66px;top:141px;width:1546px;height:803px;background:#fff"></div>
<svg style="left:0;top:0" width="1867" height="998" viewBox="0 0 1867 998">
 <defs>
  <clipPath id="rc"><rect x="244" y="211" width="1191" height="672"/></clipPath>
  <clipPath id="cv"><rect x="66" y="141" width="1546" height="803"/></clipPath>
  <filter id="b2" x="-10%" y="-10%" width="120%" height="120%"><feGaussianBlur stdDeviation="2"/></filter>
  <filter id="b4" x="-20%" y="-20%" width="140%" height="140%"><feGaussianBlur stdDeviation="4"/></filter>
  <filter id="b8" x="-30%" y="-30%" width="160%" height="160%"><feGaussianBlur stdDeviation="8"/></filter>
  <filter id="b14" x="-40%" y="-40%" width="180%" height="180%"><feGaussianBlur stdDeviation="14"/></filter>
  <filter id="b0" x="-10%" y="-10%" width="120%" height="120%"><feGaussianBlur stdDeviation="0.6"/></filter>
  <linearGradient id="hairg" x1="0" y1="0" x2="0" y2="1" gradientUnits="userSpaceOnUse" x1="0" y1="206" x2="0" y2="700">
   <stop offset="0" stop-color="#000"/><stop offset="0.25" stop-color="#0c0103"/><stop offset="0.5" stop-color="#2a040b"/><stop offset="1" stop-color="#4a0812"/>
  </linearGradient>
 </defs>
 <g clip-path="url(#cv)">
  <!-- smudges outside frame -->
  <path d="M700 206C760 200 860 197 1000 204L1000 210H700Z" fill="#bbb" filter="url(#b2)" opacity="0.7"/>
  <path d="M330 891C420 888 600 889 760 892C800 894 900 893 1000 891V894C800 896 500 895 330 893Z" fill="#e4e4e4" filter="url(#b2)" opacity="0.5"/>
  <rect x="239" y="206" width="1201" height="682" rx="5" fill="#000"/>
  <rect x="244" y="210.5" width="1191" height="673" fill="#960f22"/>
 </g>
 <g clip-path="url(#rc)">
  <!-- base body region -->
  <path d="M470 690L505 667L500 560L510 470L525 430L494 381L545 385L580 360L640 300L760 250L962 250L1060 300L1120 380L1132 448L1120 520L1101 585L1060 630L1028 654L1000 668L960 730L892 805L840 805L785 784L700 730L674 730L600 693L523 685Z" fill="#4e0912" filter="url(#b2)"/>
  <!-- hair dome dark -->
  <clipPath id="hc"><path d="M545 380C560 350 578 322 598 305C632 270 672 238 740 213C810 204 900 203 962 208C1015 214 1055 240 1090 283C1122 320 1140 365 1142 420C1143 470 1135 505 1125 530L1065 590L1035 585L1000 560L985 500L978 420L975 350L940 365L913 380L895 470L880 520L800 540L720 575L650 610L640 560L600 440L520 400Z"/></clipPath>
  <g clip-path="url(#hc)">
   <rect x="500" y="200" width="700" height="400" fill="#1e0306"/>
   <path d="M560 370C580 320 610 280 660 245C720 215 800 208 880 210C960 212 1030 235 1080 280C1110 310 1135 350 1145 400" fill="none" stroke="#000" stroke-width="40" filter="url(#b8)"/>
   <path d="M640 320C710 275 800 262 880 266C960 274 1030 304 1075 350C1105 390 1118 430 1120 480" fill="none" stroke="#34060d" stroke-width="16" filter="url(#b8)" opacity="0.8"/>
   <path d="M630 400C690 345 780 322 860 328C940 336 1005 365 1045 420C1065 450 1075 480 1080 510" fill="none" stroke="#30050c" stroke-width="14" filter="url(#b8)" opacity="0.8"/>
   <path d="M1095 340C1112 380 1122 420 1125 470" fill="none" stroke="#3e070f" stroke-width="10" filter="url(#b4)" opacity="0.8"/>
   <path d="M700 500C740 460 800 430 860 420" fill="none" stroke="#2c050b" stroke-width="12" filter="url(#b8)" opacity="0.7"/>
  </g>
  <!-- right hair side band -->
  <path d="M1142 430L1128 520L1101 585L1060 630L1028 654L1000 668L995 610L1020 560L1040 460L1070 380L1110 360Z" fill="#3a060e" filter="url(#b4)"/>
  <path d="M1060 420L1090 400L1110 470L1090 560L1050 620L1040 560Z" fill="#2a040a" filter="url(#b8)" opacity="0.7"/>
  <!-- ear -->
  <path d="M494 381L560 390L647 432L650 500L640 575L611 573L579 548L543 468L517 389Z" fill="#4c0812" filter="url(#b2)"/>
  <path d="M540 410C580 420 620 440 632 470C640 510 635 545 625 560C600 555 575 530 560 490C550 460 540 430 540 410Z" fill="#640b18" filter="url(#b8)" opacity="0.6"/>
  <!-- left hair fringe + neck dark -->
  <path d="M500 500L530 440L543 468L579 548L640 575L637 628L674 730L600 693L523 685L505 660L495 600Z" fill="#2a0508" filter="url(#b4)"/>
  <path d="M492 530L500 500L520 520L515 680L495 660Z" fill="#3e0710" filter="url(#b8)" opacity="0.8"/>
  <!-- face -->
  <path d="M637 625L720 592L800 570L870 548L905 548L956 545L978 520L1054 593L1028 654L1000 668L960 730L892 805L785 784L700 730Z" fill="#4a0811" filter="url(#b4)"/>
  <path d="M720 560L800 520L880 500L950 530L950 560L870 570L800 585L720 600Z" fill="#3a0610" filter="url(#b4)" opacity="0.8"/>
  <ellipse cx="750" cy="640" rx="50" ry="60" fill="#5e0a17" filter="url(#b14)" opacity="0.6"/>
  <ellipse cx="850" cy="585" rx="60" ry="25" fill="#5a0a16" filter="url(#b14)" opacity="0.5"/>
  <ellipse cx="905" cy="650" rx="40" ry="40" fill="#380610" filter="url(#b8)" opacity="0.85"/>
  <ellipse cx="870" cy="750" rx="35" ry="16" fill="#3a0610" filter="url(#b8)" opacity="0.8"/>
  <ellipse cx="900" cy="715" rx="50" ry="35" fill="#5e0a17" filter="url(#b14)" opacity="0.5"/>
  <ellipse cx="980" cy="635" rx="18" ry="45" fill="#780c1c" filter="url(#b8)"/>
  <path d="M637 625C660 690 710 750 785 786L760 800C700 780 650 730 620 690Z" fill="#2e0509" filter="url(#b8)" opacity="0.8"/>
  <path d="M990 540C1010 550 1040 570 1054 593L1028 640L1000 640L985 600Z" fill="#4a0812" filter="url(#b4)" opacity="0.8"/>
  <path d="M600 693L620 600L650 640L690 710L740 760L790 790L760 805L690 795L674 730Z" fill="#2e0509" filter="url(#b8)"/>
  <path d="M630 600C660 590 700 580 730 575C770 560 820 545 880 525" fill="none" stroke="#1e0306" stroke-width="22" filter="url(#b8)" opacity="0.9"/>
  <!-- forehead lighter -->
  <path d="M974 352L968 400L962 470L958 545L905 540L915 470L940 400Z" fill="#660b19" filter="url(#b2)"/>
  <path d="M970 380L962 460L956 540L935 540L948 450Z" fill="#7a0d1d" filter="url(#b4)"/>
  <!-- eyebrow-level shadow band -->
  <path d="M780 500L940 525L930 545L800 535Z" fill="#3a0610" filter="url(#b4)" opacity="0.7"/>
  <!-- neck below chin -->
  <path d="M745 785L840 805L896 805L935 840L975 890L735 890Z" fill="#560a15" filter="url(#b8)"/>
  <path d="M900 820L940 840L968 883L920 883Z" fill="#2a0408" filter="url(#b4)" opacity="0.8"/>
  <!-- shoulder -->
  <path d="M245 777C300 730 420 690 523 685C600 688 660 712 707 763C730 800 745 850 760 890L244 890Z" fill="#880e20" filter="url(#b2)"/>
  <path d="M244 792C280 760 330 735 387 723C440 712 500 708 568 727C620 742 660 770 689 796C710 830 720 860 725 890L244 890Z" fill="#300409" filter="url(#b4)"/>
  <path d="M258 808C330 790 430 790 538 808C590 820 640 850 670 880L640 884C580 850 500 830 420 826C350 824 290 830 258 835Z" fill="#5a0913" filter="url(#b4)" opacity="0.85"/>
  <path d="M244 858C300 852 400 858 500 872L520 890H244Z" fill="#7a0d1d" filter="url(#b4)"/>
  <path d="M600 693C650 710 690 740 712 790C725 830 740 870 750 890L730 890C715 840 700 800 680 770C655 735 630 715 600 700Z" fill="#8c0e20" filter="url(#b2)" opacity="0.8"/>
  <!-- line strokes -->
  <g fill="none" stroke="#000" stroke-linecap="round" filter="url(#b0)">
   <path d="M245 777C280 745 380 700 447 688C490 684 523 684 560 690C610 700 650 715 674 730" stroke-width="2"/>
   <path d="M668 727C702 745 726 778 740 815C750 842 758 866 768 890L746 890C740 868 734 845 726 822C714 787 698 758 668 732Z" fill="#000" stroke="none"/>
   <path d="M494 382C520 374 560 378 600 400C625 412 640 422 650 435" stroke-width="5"/>
   <path d="M548 372C562 345 578 322 598 305C632 270 672 238 745 212" stroke-width="2"/>
   <path d="M1026 227C1060 250 1100 290 1120 330C1140 370 1145 430 1138 480C1130 530 1110 570 1085 600C1060 625 1035 645 1015 660" stroke-width="2.5"/>
   <path d="M637 612C650 660 700 740 776 775C800 790 830 800 896 803" stroke-width="2"/>
   <path d="M896 803C930 770 960 720 992 662C998 645 1001 630 1001 624" stroke-width="2"/>
   <path d="M971 553C968 590 968 620 967 629C970 645 975 650 974 656C972 668 965 675 957 679" stroke-width="2.5"/>
   <path d="M836 718C860 712 880 710 892 712C905 716 912 725 942 728" stroke-width="1.8"/>
   <path d="M794 495C830 495 900 505 940 522" stroke-width="2.5"/>
   <path d="M842 829C880 835 920 855 953 881" stroke-width="6"/>
   <path d="M836 820C870 822 900 838 930 852" stroke-width="2"/>
   <path d="M830 803V852M838 808V858" stroke-width="1.3"/>
   <path d="M826 526C845 536 870 544 895 546" stroke-width="1.5"/>
   <path d="M840 530C855 526 875 530 888 540" stroke-width="1"/>
   <circle cx="858" cy="535" r="4" stroke-width="1.2"/>
   <path d="M985 547C1010 545 1035 546 1058 548" stroke-width="3.5"/>
   <path d="M982 578C1000 586 1015 588 1030 586" stroke-width="1.5"/>
   <path d="M990 572C1000 568 1015 570 1025 578" stroke-width="1"/>
   <circle cx="1003" cy="578" r="3.5" stroke-width="1.2"/>
   <path d="M1040 570L1010 640M1050 560L1020 620" stroke-width="2.5"/>
   <path d="M517 389C530 430 545 470 579 548C595 565 620 573 640 574" stroke-width="1.5"/>
   <path d="M580 420C610 440 630 470 640 520" stroke-width="1.3"/>
   <path d="M1054 593C1040 620 1020 650 1000 668" stroke-width="1.5"/>
   <g stroke-width="1.4">
    <path d="M700 560C730 500 780 430 830 380"/>
    <path d="M745 580C770 500 800 430 845 375"/>
    <path d="M820 560C840 480 870 410 900 365"/>
    <path d="M870 505C880 440 900 390 925 365"/>
    <path d="M880 470C910 410 940 370 975 347"/>
    <path d="M975 347C985 420 990 480 978 560" stroke-width="2.5"/>
    <path d="M1000 400C1005 470 1000 530 990 580" stroke-width="2.5"/>
    <path d="M1030 420C1030 480 1015 540 1000 600" stroke-width="3"/>
    <path d="M960 370C940 420 925 470 920 530" stroke-width="2"/>
    <path d="M900 380C880 420 860 470 850 540" stroke-width="2"/>
    <path d="M930 510C935 440 950 390 975 350"/>
    <path d="M978 376C985 430 985 480 960 540"/>
    <path d="M1020 400C1015 470 1000 540 985 590"/>
    <path d="M1045 450C1040 510 1020 570 1005 620"/>
    <path d="M1055 500C1045 560 1030 610 1010 650"/>
    <path d="M660 600C690 540 730 490 770 450"/>
    <path d="M620 690C640 620 680 560 720 520"/>
    <path d="M570 690C580 640 600 590 640 550"/>
    <path d="M528 445C515 480 502 520 492 560"/>
    <path d="M515 520C508 570 500 620 496 680"/>
    <path d="M530 540C525 600 525 650 520 680"/>
   </g>
  </g>
 </g>
</svg>
</body></html>
